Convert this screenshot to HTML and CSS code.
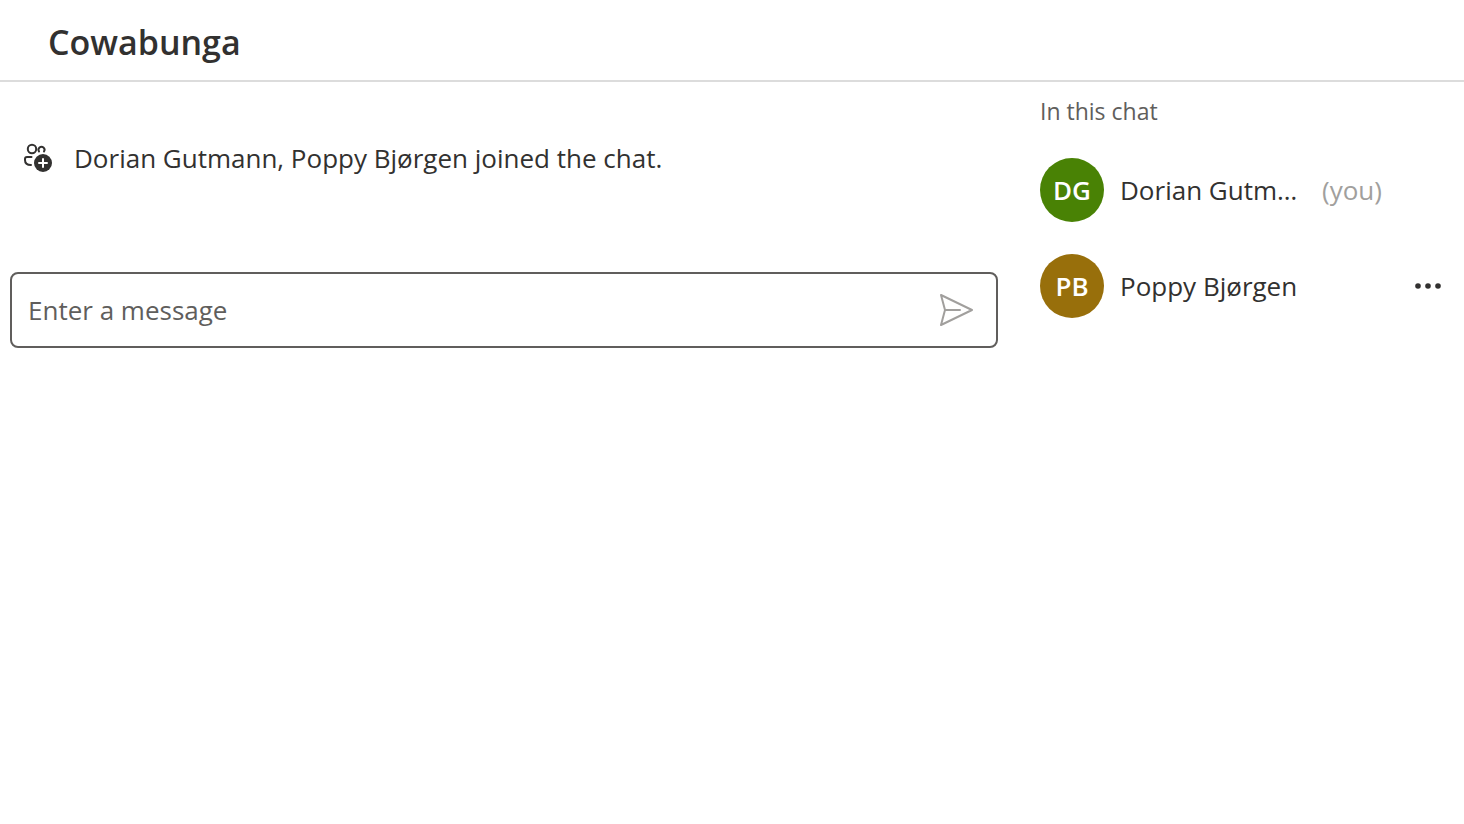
FILE: index.html
```html
<!DOCTYPE html>
<html lang="en">
<head>
<meta charset="utf-8">
<meta name="viewport" content="width=device-width, initial-scale=1">
<title>Cowabunga</title>
<link rel="stylesheet" href="styles.css">
</head>
<body>
<header class="topbar"><h1 class="topic">Cowabunga</h1></header>
<div class="layout">
  <main class="chat">
    <div class="system-message">
      <svg class="join-icon" viewBox="0 0 32 32" aria-hidden="true">
        <g fill="none" stroke="#323130" stroke-width="2" stroke-linecap="round">
          <circle cx="10" cy="7" r="4.2"/>
          <path d="M17 9.500a3 3 0 1 1 5 0M9.500 15H5Q3 15 3 17v1q0 5 6 5"/>
        </g>
        <circle cx="21" cy="21" r="9" fill="#323130"/>
        <path d="M21 17v8M17 21h8" stroke="#fff" stroke-width="2" stroke-linecap="round"/>
      </svg>
      <p class="system-text">Dorian Gutmann, Poppy Bjørgen joined the chat.</p>
    </div>
    <form class="sendbox">
      <input class="sendbox-input" type="text" placeholder="Enter a message" aria-label="Enter a message">
      <button class="icon-button send" type="button" aria-label="Send message">
        <svg class="send-icon" viewBox="0 0 36 36" fill="none" stroke="#a19f9d" stroke-width="2" stroke-linejoin="round" stroke-linecap="round" aria-hidden="true">
          <path d="M3 3l31 15L3 33l4-15zM7 18h15"/>
        </svg>
      </button>
    </form>
  </main>
  <aside class="people">
    <h2 class="people-title">In this chat</h2>
    <ul class="people-list">
      <li class="person">
        <span class="avatar avatar-green">DG</span>
        <span class="person-name">Dorian Gutmann</span>
        <span class="you">(you)</span>
      </li>
      <li class="person">
        <span class="avatar avatar-gold">PB</span>
        <span class="person-name">Poppy Bjørgen</span>
        <button class="icon-button more" type="button" aria-label="More options">
          <svg class="more-icon" viewBox="0 0 32 32" fill="#323130" aria-hidden="true"><circle cx="6" cy="16" r="2.800"/><circle cx="16" cy="16" r="2.800"/><circle cx="26" cy="16" r="2.800"/></svg>
        </button>
      </li>
    </ul>
  </aside>
</div>
</body>
</html>
```
FILE: styles.css
```css
* { box-sizing: border-box; }
body {
  margin: 0;
  background: #fff;
  color: #323130;
  font-family: "Segoe UI", "Open Sans", "Noto Sans", sans-serif;
  font-size: 26px;
  line-height: 32px;
}
h1, h2, p, ul { margin: 0; padding: 0; }
.topbar {
  padding: 22px 48px 18px;
  border-bottom: 2px solid #dcdcdc;
}
.topic { font-size: 34px; line-height: 40px; font-weight: 600; }
.layout {
  display: grid;
  grid-template-columns: minmax(0, 1fr) 424px;
  column-gap: 42px;
}
.chat { padding: 60px 0 0 10px; }
.system-message {
  display: flex;
  align-items: center;
  gap: 20px;
  padding-left: 12px;
}
.join-icon { width: 32px; height: 32px; flex: none; }
.sendbox {
  display: flex;
  align-items: center;
  height: 76px;
  margin-top: 98px;
  padding: 0 22px 0 16px;
  border: 2px solid #605e5c;
  border-radius: 8px;
}
.sendbox-input {
  flex: 1;
  min-width: 0;
  height: 40px;
  padding: 0;
  border: 0;
  outline: 0;
  background: none;
  color: inherit;
  font: inherit;
  line-height: 40px;
}
.sendbox-input::placeholder { color: #605e5c; opacity: 1; }
.icon-button {
  display: flex;
  flex: none;
  padding: 0;
  border: 0;
  background: none;
  cursor: pointer;
}
.send-icon { width: 36px; height: 36px; }
.people { padding: 14px 20px 0 0; }
.people-title {
  color: #605e5c;
  font-size: 23px;
  line-height: 30px;
  font-weight: 400;
}
.people-list { list-style: none; margin-top: 16px; }
.person {
  display: flex;
  align-items: center;
  height: 96px;
}
.avatar {
  display: grid;
  place-items: center;
  flex: none;
  width: 64px;
  height: 64px;
  margin-right: 16px;
  border-radius: 50%;
  color: #fff;
  font-size: 26px;
  font-weight: 600;
}
.avatar-green { background: #498205; }
.avatar-gold { background: #986f0b; }
.person-name {
  width: 184px;
  overflow: hidden;
  white-space: nowrap;
  text-overflow: ellipsis;
}
.you { margin-left: 18px; color: #a19f9d; }
.more { margin-left: auto; }
.more-icon { width: 32px; height: 32px; }
```
